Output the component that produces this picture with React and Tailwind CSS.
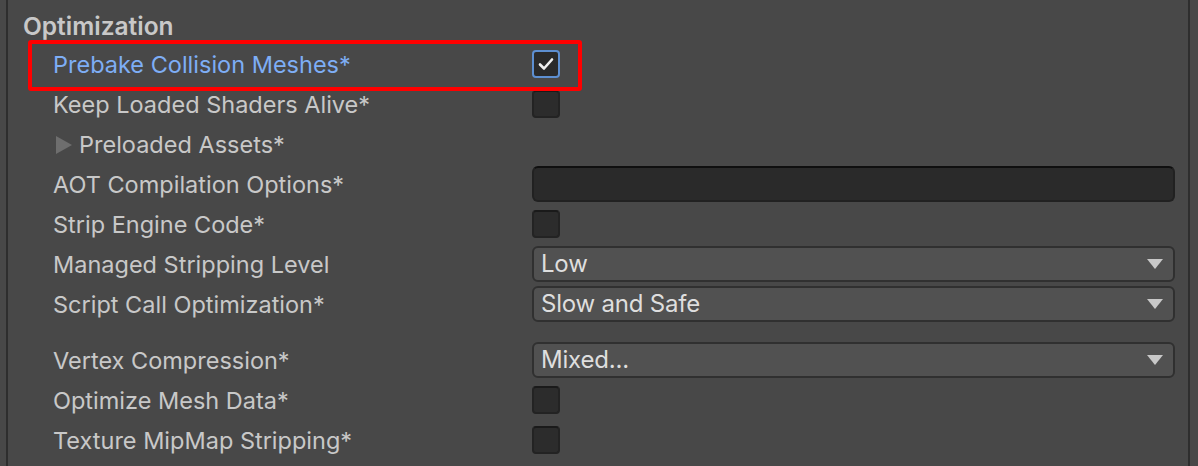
import React from "react";

const rowsTop = [
  { label: "Prebake Collision Meshes*", type: "check", checked: true, highlight: true },
  { label: "Keep Loaded Shaders Alive*", type: "check" },
  { label: "Preloaded Assets*", type: "foldout" },
  { label: "AOT Compilation Options*", type: "text" },
  { label: "Strip Engine Code*", type: "check" },
  { label: "Managed Stripping Level", type: "select", value: "Low" },
  { label: "Script Call Optimization*", type: "select", value: "Slow and Safe" },
];

const rowsBottom = [
  { label: "Vertex Compression*", type: "select", value: "Mixed..." },
  { label: "Optimize Mesh Data*", type: "check" },
  { label: "Texture MipMap Stripping*", type: "check" },
];

const Checkbox = ({ checked }) => (
  <div
    className={
      checked
        ? "w-[28px] h-[28px] rounded-[4px] border-2 border-[#5d8fd1] bg-[#2a2a2a] flex items-center justify-center"
        : "w-[28px] h-[28px] rounded-[4px] border-2 border-[#232323] border-t-[#1a1a1a] bg-[#2c2c2c]"
    }
  >
    {checked && (
      <svg width="18" height="18" viewBox="0 0 18 18">
        <path d="M3 9.5 L7 13.5 L15 4.5" fill="none" stroke="#f0f0f0" strokeWidth="2.6" strokeLinecap="round" strokeLinejoin="round" />
      </svg>
    )}
  </div>
);

const Select = ({ value }) => (
  <div className="w-full h-[36px] rounded-[6px] border-2 border-[#303030] bg-[#515151] flex items-center justify-between pl-[7px] pr-[10px]">
    <span className="text-[24px] text-[#dedede] leading-none tracking-[-0.2px]">{value}</span>
    <svg width="16" height="10" viewBox="0 0 16 10">
      <path d="M0 0 H16 L8 10 Z" fill="#c8c8c8" />
    </svg>
  </div>
);

const Row = ({ row }) => (
  <div className="h-[40px] flex items-center">
    <div className="w-[479px] flex items-center pt-[1px]">
      {row.type === "foldout" && (
        <svg width="16" height="18" viewBox="0 0 16 18" className="mr-[7px] ml-[3px]">
          <path d="M0 0 L16 9 L0 18 Z" fill="#6e6e6e" />
        </svg>
      )}
      <span
        className={
          row.highlight
            ? "text-[23.5px] text-[#7eaef5] leading-none"
            : "text-[23.5px] text-[#c8c8c8] leading-none"
        }
      >
        {row.label}
      </span>
    </div>
    <div className="flex-1 flex items-center pr-[13px]">
      {row.type === "check" && <Checkbox checked={row.checked} />}
      {row.type === "text" && (
        <div className="w-full h-[36px] rounded-[6px] border-2 border-[#212121] border-t-[#0f0f0f] bg-[#2a2a2a]" />
      )}
      {row.type === "select" && <Select value={row.value} />}
    </div>
  </div>
);

export default function App() {
  return (
    <div
      className="relative w-[1198px] h-[466px] bg-[#484848] overflow-hidden pl-[6px]"
      style={{ fontFamily: "Inter, 'Noto Sans', sans-serif" }}
    >
      <div className="w-[1184px] h-full border-l-2 border-r-2 border-[#2e2e2e]">
        <div className="h-[44px] pl-[15px] flex items-center pt-[9px]">
          <span className="text-[24.5px] font-semibold text-[#c8c8c8] leading-none">Optimization</span>
        </div>
        <div className="pl-[45px]">
          {rowsTop.map((r) => (
            <Row key={r.label} row={r} />
          ))}
          <div className="h-[16px]" />
          {rowsBottom.map((r) => (
            <Row key={r.label} row={r} />
          ))}
        </div>
      </div>
      {/* annotation box */}
      <div className="absolute left-[28px] top-[40px] w-[554px] h-[51px] border-4 border-[#ff0000] rounded-[3px]" />
    </div>
  );
}
